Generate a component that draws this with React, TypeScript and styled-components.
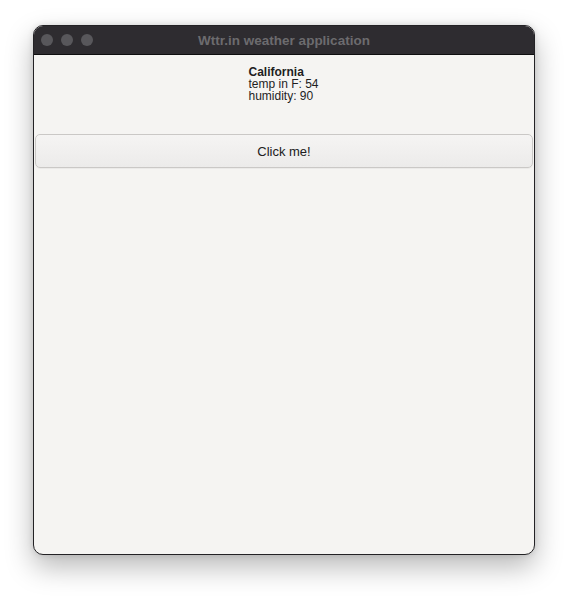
import styled, { createGlobalStyle } from "styled-components";

const GlobalStyle = createGlobalStyle`
  html, body {
    margin: 0;
    padding: 0;
    background: #ffffff;
    font-family: "Liberation Sans", Arial, sans-serif;
  }
`;

const weather = { city: "California", tempF: 54, humidity: 90 };

export default function App() {
    return <Page>
        <GlobalStyle />
        <Window>
            <TitleBar>
                <Lights>
                    <Light />
                    <Light />
                    <Light />
                </Lights>
                <Title>Wttr.in weather application</Title>
            </TitleBar>
            <Content>
                <Info>
                    <City>{weather.city}</City>
                    <Line>temp in F: {weather.tempF}</Line>
                    <Line>humidity: {weather.humidity}</Line>
                </Info>
                <Button type="button">Click me!</Button>
            </Content>
        </Window>
    </Page>
}

const Page = styled.div`
  padding: 25px 0 0 33px;
  height: 596px;
  box-sizing: border-box;
`;

const Window = styled.div`
  width: 502px;
  height: 530px;
  box-sizing: border-box;
  border: 1px solid #232225;
  border-radius: 10px;
  overflow: hidden;
  background: #f5f4f2;
  display: flex;
  flex-direction: column;
  box-shadow: 0 12px 28px rgba(0, 0, 0, 0.28), 0 0 6px rgba(0, 0, 0, 0.12);
`;

const TitleBar = styled.div`
  height: 28px;
  flex: none;
  background: #2e2c30;
  border-bottom: 1px solid #0e0e0f;
  display: flex;
  align-items: center;
  position: relative;
`;

const Lights = styled.div`
  display: flex;
  gap: 8px;
  padding-left: 7px;
`;

const Light = styled.span`
  width: 12px;
  height: 12px;
  border-radius: 50%;
  background: #58575b;
`;

const Title = styled.div`
  position: absolute;
  left: 0;
  right: 0;
  text-align: center;
  font-size: 13.5px;
  font-weight: bold;
  color: #6c6b6e;
  pointer-events: none;
`;

const Content = styled.div`
  flex: 1;
  display: flex;
  flex-direction: column;
  padding: 11px 1px 0;
`;

const Info = styled.div`
  align-self: center;
  display: flex;
  flex-direction: column;
  font-size: 12px;
  line-height: 12px;
  color: #1e1e1e;
  height: 68px;
  margin-left: -1px;
`;

const City = styled.div`
  font-weight: bold;
`;

const Line = styled.div``;

const Button = styled.button`
  height: 34px;
  border: 1px solid #cac8c6;
  border-radius: 5px;
  background: linear-gradient(#f5f4f3, #ecebea);
  font-family: "Liberation Sans", Arial, sans-serif;
  font-size: 13px;
  color: #202020;
  box-shadow: 0 1px 0 rgba(0, 0, 0, 0.04);
  padding: 0;
`;
